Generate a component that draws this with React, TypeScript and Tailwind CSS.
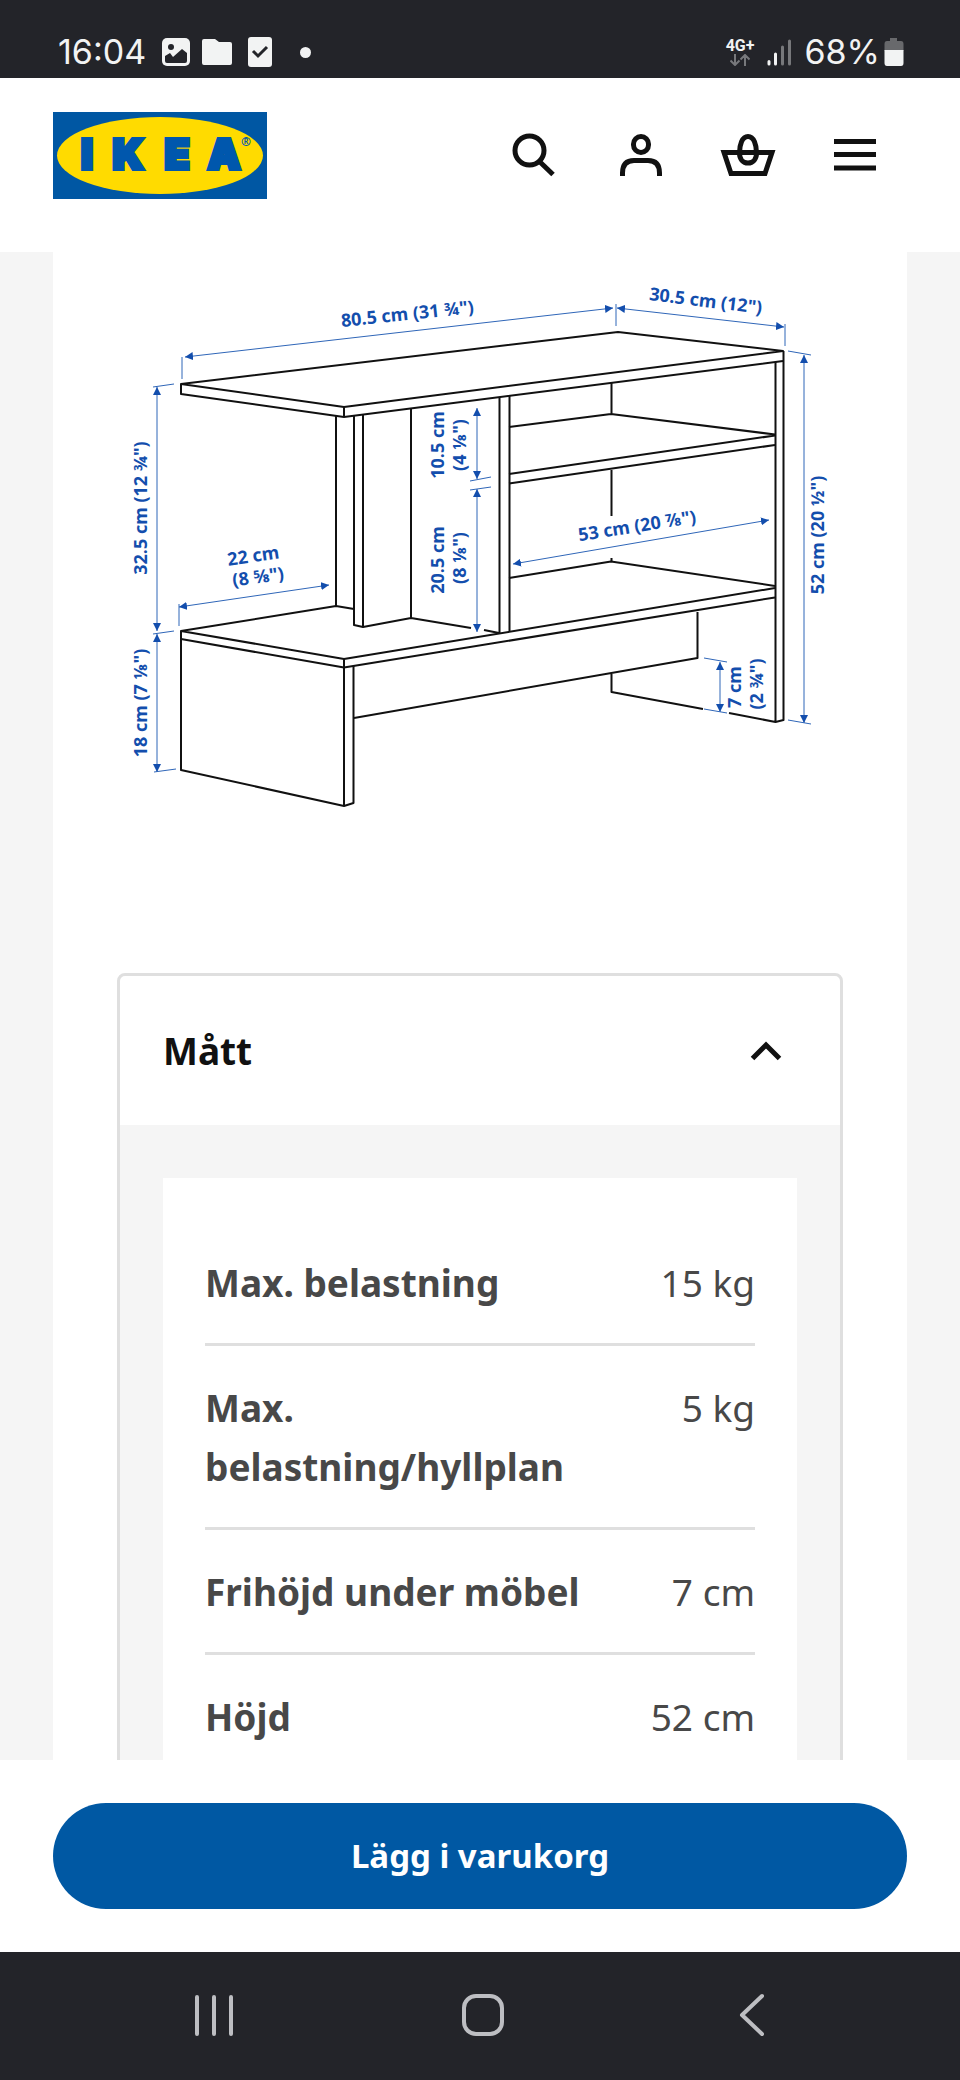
import React, { useState } from 'react'

interface Measurement {
    label: string
    value: string
}

interface DimensionLabel {
    text: string
    x: number
    y: number
    angle: number
}

type Segment = [number, number, number, number]

const measurements: Measurement[] = [
    { label: 'Max. belastning', value: '15 kg' },
    { label: 'Max. belastning/hyllplan', value: '5 kg' },
    { label: 'Frihöjd under möbel', value: '7 cm' },
    { label: 'Höjd', value: '52 cm' },
]

// Dimension lines with an arrowhead at both ends
const arrows: Segment[] = [
    [185, 357, 613, 308],
    [617, 308, 784, 327],
    [804, 355, 804, 723],
    [157, 387, 157, 631],
    [157, 634, 157, 772],
    [179, 607, 329, 585],
    [477, 408, 477, 479],
    [477, 489, 477, 632],
    [513, 564, 769, 520],
    [720, 662, 720, 712],
]

const ticks: Segment[] = [
    [182, 357, 182, 379],
    [616, 304, 616, 326],
    [785, 324, 785, 346],
    [788, 351, 811, 355],
    [788, 720, 811, 724],
    [153, 387, 174, 384],
    [153, 634, 174, 631],
    [154, 772, 176, 769],
    [179, 604, 179, 626],
    [470, 481, 491, 477],
    [470, 490, 491, 487],
    [704, 658, 727, 662],
    [704, 709, 727, 713],
]

const dimensionLabels: DimensionLabel[] = [
    { text: '80.5 cm (31 ¾")', x: 408, y: 320, angle: -6 },
    { text: '30.5 cm (12")', x: 705, y: 307, angle: 7 },
    { text: '52 cm (20 ½")', x: 824, y: 535, angle: -90 },
    { text: '32.5 cm (12 ¾")', x: 147, y: 508, angle: -90 },
    { text: '18 cm (7 ⅛")', x: 147, y: 703, angle: -90 },
    { text: '22 cm', x: 254, y: 562, angle: -8 },
    { text: '(8 ⅝")', x: 259, y: 583, angle: -8 },
    { text: '10.5 cm', x: 444, y: 445, angle: -90 },
    { text: '(4 ⅛")', x: 466, y: 445, angle: -90 },
    { text: '20.5 cm', x: 444, y: 560, angle: -90 },
    { text: '(8 ⅛")', x: 466, y: 558, angle: -90 },
    { text: '53 cm (20 ⅞")', x: 638, y: 532, angle: -9 },
    { text: '7 cm', x: 741, y: 687, angle: -90 },
    { text: '(2 ¾")', x: 763, y: 684, angle: -90 },
]

const StatusBar: React.FC = () => (
    <div className="flex h-[78px] shrink-0 items-center justify-between bg-[#232429] pt-[26px] pr-14 pl-[58px] font-['Inter',sans-serif] text-[#f2f3f3]">
        <div className="flex items-center">
            <span className="text-[34px] leading-10">16:04</span>
            <svg className="ml-4 h-7 w-7" viewBox="0 0 28 28" aria-hidden="true">
                <rect width="28" height="28" rx="5" fill="currentColor" />
                <circle cx="9" cy="9" r="3" fill="#232429" />
                <path d="M3 18 8 15 11 19 20 11 25 15V23Q25 25 23 25H5Q3 25 3 23Z" fill="#232429" />
            </svg>
            <svg className="ml-3 h-[26px] w-[30px]" viewBox="0 0 30 26" aria-hidden="true">
                <path d="M2 0H13L17 3H28Q30 3 30 5V24Q30 26 28 26H2Q0 26 0 24V2Q0 0 2 0Z" fill="currentColor" />
            </svg>
            <svg className="ml-4 h-[30px] w-6" viewBox="0 0 24 30" aria-hidden="true">
                <rect width="24" height="30" rx="3" fill="currentColor" />
                <path d="m5 14 5 5 9-9" fill="none" stroke="#232429" strokeWidth="3" />
            </svg>
            <span className="ml-7 h-[11px] w-[11px] rounded-full bg-current" />
        </div>
        <div className="flex items-center">
            <div className="flex flex-col items-center">
                <span className="font-['Roboto',sans-serif] text-[16px] leading-4 font-bold">4G+</span>
                <svg className="h-3 w-5" viewBox="0 0 20 12" fill="none" stroke="#77787b" strokeWidth="2" aria-hidden="true">
                    <path d="M5 0V11M0.500 6.500 5 11 9.500 6.500M15 12V1M10.500 5.500 15 1 19.500 5.500" />
                </svg>
            </div>
            <svg className="ml-3 h-[27px] w-[26px]" viewBox="0 0 26 27" strokeWidth="3" strokeLinecap="round" stroke="currentColor" aria-hidden="true">
                <path d="M3 22.500V25M9.500 15V25" />
                <path d="M16.500 8V25M23.500 2V25" stroke="#77787b" />
            </svg>
            <span className="ml-3 text-[34px] leading-10">68%</span>
            <svg className="ml-1 h-7 w-5" viewBox="0 0 20 28" aria-hidden="true">
                <path d="M6 0H13V3H17Q19.500 3 19.500 6V13H0.500V6Q0.500 3 3 3H6Z" fill="#68696c" />
                <path d="M0.500 12H19.500V25Q19.500 28 17 28H3Q0.500 28 0.500 25Z" fill="currentColor" />
            </svg>
        </div>
    </div>
)

const Logo: React.FC = () => (
    <svg className="h-[87px] w-[214px]" viewBox="0 0 214 87" role="img" aria-label="IKEA">
        <rect width="214" height="87" fill="#0057a3" />
        <ellipse cx="107" cy="43.500" rx="103" ry="38.500" fill="#ffdb00" />
        <g
            className="font-['Inter',sans-serif] text-[41px] font-black"
            fill="#0057ad"
            stroke="#0057ad"
            strokeWidth="4"
            textAnchor="middle"
        >
            <text x="34" y="57">I</text>
            <text x="75" y="57">K</text>
            <text x="124" y="57">E</text>
            <text x="171" y="57">A</text>
        </g>
        <text x="193" y="34" textAnchor="middle" fill="#0057ad" className="font-['Noto_Sans',sans-serif] text-[12px] font-bold">®</text>
    </svg>
)

const Header: React.FC = () => (
    <header className="flex h-[174px] shrink-0 items-center justify-between bg-white px-[53px] pb-5 text-[#111]">
        <a href="#"><Logo /></a>
        <nav className="flex gap-[51px] pr-6">
            <button type="button" aria-label="Sök">
                <svg className="h-14 w-14" viewBox="0 0 56 56" fill="none" stroke="currentColor" strokeWidth="5">
                    <circle cx="23.500" cy="23.500" r="14.500" />
                    <path d="M34 35 47 47.500" />
                </svg>
            </button>
            <button type="button" aria-label="Logga in">
                <svg className="h-14 w-14" viewBox="0 0 56 56" fill="none" stroke="currentColor" strokeWidth="5">
                    <rect x="20.500" y="9.500" width="15" height="16" rx="7.500" />
                    <path d="M9.500 49V46Q9.500 33.500 21 33.500H35Q46.500 33.500 46.500 46V49" />
                </svg>
            </button>
            <button type="button" aria-label="Varukorg">
                <svg className="h-14 w-14" viewBox="0 0 56 56" fill="none" stroke="currentColor" strokeWidth="5">
                    <path d="M4 25.500H52L45 46.500H11Z" />
                    <path d="M28 9.500C22 9.500 19.500 18 19.500 26C19.500 32 23 36 28 36S36.500 32 36.500 26C36.500 18 34 9.500 28 9.500Z" />
                </svg>
            </button>
            <button type="button" aria-label="Meny">
                <svg className="h-14 w-14" viewBox="0 0 56 56" fill="none" stroke="currentColor" strokeWidth="5">
                    <path d="M7 14.500H49M7 27.500H49M7 41H49" />
                </svg>
            </button>
        </nav>
    </header>
)

const DimensionDrawing: React.FC = () => (
    <svg className="h-auto w-full" viewBox="53 252 854 642" role="img" aria-label="Måttskiss">
        <defs>
            <marker id="head" viewBox="0 0 8 8" refX="8" refY="4" markerWidth="8" markerHeight="8" markerUnits="userSpaceOnUse" orient="auto-start-reverse">
                <path d="M0 0 8 4 0 8Z" fill="#134ead" />
            </marker>
        </defs>
        <g fill="none" stroke="#111" strokeWidth="2" strokeLinejoin="round">
            {/* Top board */}
            <path d="M181 384 618 332 783 351 344 407Z" />
            <path d="M181 384V394L344 417 783 361M344 407V417" />
            {/* Left upright and divider */}
            <path d="M336 416V606M354 416V625L363 627V415M363 627 411 618V409M411 618 471 628M484 630 499 633" />
            <path d="M499.500 397V633M509.500 396V632" />
            {/* Shelves */}
            <path d="M611.500 383V414M509 427 611 414 775 434.500M509 474 775 435.500M509 483.500 775 445M611.500 470V516M611.500 558V561" />
            <path d="M509 578 611 561.500 775 586" />
            {/* Base board */}
            <path d="M354 609 336 606 181 631 344 659 775 588M181 639 344 667.500 775 597.500" />
            {/* Legs and rail */}
            <path d="M181 631V770L344 806 353.500 803V666M344 659V806" />
            <path d="M354 718 697.500 658V612M611.500 673V692L703 709M729 713 775.500 722 783.500 720V351M775.500 362V722" />
        </g>
        <g stroke="#2f66b8" strokeWidth="1">
            {arrows.map(([x1, y1, x2, y2]) => (
                <line key={`${x1}-${y1}`} x1={x1} y1={y1} x2={x2} y2={y2} markerStart="url(#head)" markerEnd="url(#head)" />
            ))}
            {ticks.map(([x1, y1, x2, y2]) => (
                <line key={`${x1}-${y1}`} x1={x1} y1={y1} x2={x2} y2={y2} />
            ))}
        </g>
        <g fill="#134ead" textAnchor="middle" className="text-[18px] font-bold">
            {dimensionLabels.map((label) => (
                <text key={label.text} x={label.x} y={label.y} transform={`rotate(${label.angle} ${label.x} ${label.y})`}>
                    {label.text}
                </text>
            ))}
        </g>
    </svg>
)

const MeasurementsPanel: React.FC = () => {
    const [open, setOpen] = useState(true)

    return (
        <section className="mx-16 overflow-hidden rounded-lg border-3 border-[#dfdfdf]">
            <h2>
                <button
                    type="button"
                    aria-expanded={open}
                    onClick={() => setOpen(!open)}
                    className="flex h-[149px] w-full items-center justify-between pr-[54px] pl-[43px] text-left text-[37px] leading-[59px] font-bold text-[#111]"
                >
                    Mått
                    <svg className={open ? 'h-10 w-10' : 'h-10 w-10 rotate-180'} viewBox="0 0 40 40" fill="none" stroke="currentColor" strokeWidth="5" aria-hidden="true">
                        <path d="M6.500 27.500 20 14 33.500 27.500" />
                    </svg>
                </button>
            </h2>
            {open && (
                <div className="bg-[#f5f5f5] px-[43px] pt-[53px] pb-12">
                    <div className="bg-white px-[42px] py-[43px]">
                        <table className="w-full text-[37px] leading-[59px] text-[#484848]">
                            <tbody>
                                {measurements.map((row) => (
                                    <tr key={row.label} className="border-b-3 border-[#dfdfdf] align-top">
                                        <th scope="row" className="pt-8 pb-[31px] text-left font-bold">{row.label}</th>
                                        <td className="pt-8 pb-[31px] pl-8 text-right whitespace-nowrap">{row.value}</td>
                                    </tr>
                                ))}
                            </tbody>
                        </table>
                    </div>
                </div>
            )}
        </section>
    )
}

const NavigationBar: React.FC = () => (
    <nav className="flex h-32 shrink-0 items-center justify-between bg-[#232429] px-[190px] text-[#bdbec2]">
        <button type="button" aria-label="Senaste">
            <svg className="h-12 w-12" viewBox="0 0 48 48" fill="none" stroke="currentColor" strokeWidth="4" strokeLinecap="round">
                <path d="M7 5V42M24 5V42M41 5V42" />
            </svg>
        </button>
        <button type="button" aria-label="Hem">
            <svg className="h-12 w-12" viewBox="0 0 48 48" fill="none" stroke="currentColor" strokeWidth="4">
                <rect x="8" y="4" width="38" height="38" rx="12" />
            </svg>
        </button>
        <button type="button" aria-label="Tillbaka">
            <svg className="h-12 w-12" viewBox="0 0 48 48" fill="none" stroke="currentColor" strokeWidth="4" strokeLinecap="round" strokeLinejoin="round">
                <path d="M40 4 20 23 40 42" />
            </svg>
        </button>
    </nav>
)

const App: React.FC = () => (
    <div className="flex h-screen flex-col bg-white font-['Noto_Sans',sans-serif]">
        <StatusBar />
        <Header />
        <main className="min-h-0 flex-1 overflow-y-auto bg-[#f5f5f5] px-[53px] [scrollbar-width:none]">
            <div className="bg-white pb-20">
                <div className="pb-[79px]">
                    <DimensionDrawing />
                </div>
                <MeasurementsPanel />
            </div>
        </main>
        <div className="shrink-0 bg-white px-[53px] py-[43px]">
            <button type="button" className="h-[106px] w-full rounded-full bg-[#0058a3] text-[33px] font-bold text-white">
                Lägg i varukorg
            </button>
        </div>
        <NavigationBar />
    </div>
)

export default App
